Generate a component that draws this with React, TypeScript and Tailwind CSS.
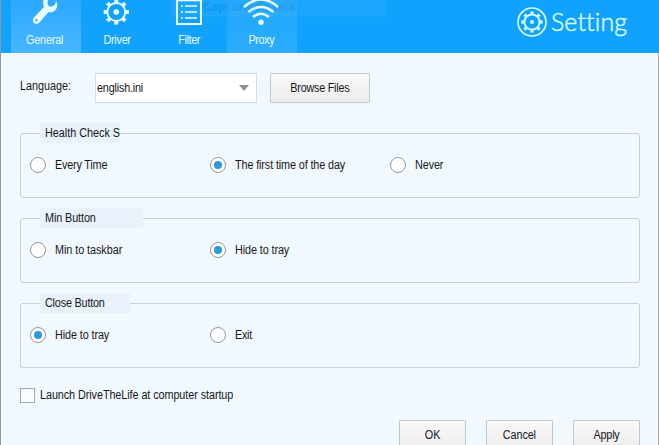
import type { ReactNode } from "react";

function Label({ children, className = "" }: { children: ReactNode; className?: string }) {
  return (
    <span className={`inline-block whitespace-nowrap text-[12px] leading-4 scale-x-90 ${className}`}>
      {children}
    </span>
  );
}

function GearShape({ r, teeth, tooth, stroke, dot }: { r: number; teeth: number; tooth: number; stroke: number; dot: number }) {
  return (
    <>
      <circle r={r} fill="none" stroke="currentColor" strokeWidth={stroke} />
      {Array.from({ length: teeth }, (_, i) => (
        <rect
          key={i}
          x={-tooth / 2}
          y={-r - tooth * 0.95}
          width={tooth}
          height={tooth}
          fill="currentColor"
          transform={`rotate(${(i * 360) / teeth})`}
        />
      ))}
      <circle r={dot} fill="currentColor" />
    </>
  );
}

function WrenchIcon() {
  return (
    <svg className="h-7 w-[70px]" viewBox="0 0 70 28">
      <path
        d="M34 -4 C32 -1 31.6 3.4 33 7 L22.9 17.6 C19.9 21.4 24.4 26 28.2 22.8 L37.6 12 C42.6 13.4 46.6 9.6 46.2 3.6 L45 0.6 C44.6 3.8 43.4 6 40.8 6.6 C38 7 36.2 5 36.4 2 L38.6 -4 Z"
        fill="currentColor"
      />
      <circle cx="25.4" cy="20.2" r="1.2" fill="#3baeff" />
    </svg>
  );
}

function DriverIcon() {
  return (
    <svg className="h-7 w-[70px]" viewBox="0 0 70 28">
      <g transform="translate(33.3 12)">
        <GearShape r={9} teeth={8} tooth={3.8} stroke={2} dot={2.8} />
      </g>
    </svg>
  );
}

function FilterIcon() {
  return (
    <svg className="h-7 w-[70px]" viewBox="0 0 70 28">
      <rect x="22" y="0.3" width="24" height="23.7" fill="none" stroke="currentColor" strokeWidth="2" />
      {[6, 12, 18].map((y) => (
        <g key={y} stroke="currentColor" strokeWidth="1.7">
          <path d={`M26 ${y}h2M30 ${y}h12`} />
        </g>
      ))}
    </svg>
  );
}

function ProxyIcon() {
  return (
    <svg className="h-7 w-[70px]" viewBox="0 0 70 28">
      <g fill="none" stroke="currentColor" strokeWidth="2.4">
        <path d="M26 17 Q34 10.5 42 17" />
        <path d="M21.4 12 Q34 1.8 46.6 12" />
        <path d="M17 7 Q34 -8 51 7" />
      </g>
      <circle cx="34" cy="22.3" r="2.7" fill="currentColor" />
    </svg>
  );
}

function Tab({ icon, label, className = "", labelClass = "" }: { icon: ReactNode; label: string; className?: string; labelClass?: string }) {
  return (
    <div className={`flex h-[53px] w-[70px] flex-col items-center text-[#eafcff] ${className}`}>
      {icon}
      <Label className={`mt-1 mr-0.5 ${labelClass}`}>{label}</Label>
    </div>
  );
}

function Button({ children, className = "" }: { children: ReactNode; className?: string }) {
  return (
    <button className={`flex h-[30px] items-center justify-center rounded-[1px] border border-[#c3c8cd] bg-linear-to-b from-[#f9f9f9] to-[#ededee] ${className}`}>
      {children}
    </button>
  );
}

function Radio({ label, checked = false, tracking }: { label: string; checked?: boolean; tracking: string }) {
  return (
    <div className="flex w-[180px] items-center gap-[9px]">
      <span className="flex size-4 shrink-0 items-center justify-center rounded-full border border-[#92979c] bg-white">
        {checked && <span className="size-2 rounded-full bg-[#2b9ada]" />}
      </span>
      <Label className={`origin-left ${tracking}`}>{label}</Label>
    </div>
  );
}

function Group({ title, titleClass, children }: { title: string; titleClass: string; children: ReactNode }) {
  return (
    <section className="h-[65px] w-[620px] rounded-[3px] border border-[#c3d1de]">
      <div className={`-mt-[11px] ml-[19px] flex h-5 items-center bg-[#e9f2fb] pl-[5px] ${titleClass}`}>
        <Label className="origin-left">{title}</Label>
      </div>
      <div className="mt-3.5 flex pl-[9px]">{children}</div>
    </section>
  );
}

export default function App() {
  return (
    <div className="h-[445px] w-[659px] overflow-hidden border-l border-[#8f969e] bg-[#f2f9fe] font-['Liberation_Sans',Arial,sans-serif] text-[#15171a]">
      <header className="relative flex h-[53px] bg-[#11a2fe] pl-2.5">
        <div className="absolute top-0 left-[171px] h-[17px] w-[214px] bg-[#1ba5fc]">
          <span className="ml-[31px] block font-['Open_Sans',sans-serif] text-[12px] leading-[14px] font-bold whitespace-nowrap text-[#1798ec]">Captura de tela</span>
        </div>
        <nav className="relative flex gap-0.5">
          <Tab icon={<WrenchIcon />} label="General" className="bg-linear-to-b from-[#2ba8ff] to-[#47b6ff]" labelClass="tracking-[-0.2px]" />
          <Tab icon={<DriverIcon />} label="Driver" labelClass="tracking-[-0.3px]" />
          <Tab icon={<FilterIcon />} label="Filter" labelClass="tracking-[-0.4px]" />
          <Tab icon={<ProxyIcon />} label="Proxy" className="bg-linear-to-b from-white/5 to-white/12" labelClass="tracking-[-0.4px]" />
        </nav>
        <div className="ml-auto flex items-start pr-8 text-[#d5fbff]">
          <svg className="mt-[7px] size-[30px]" viewBox="-15 -15 30 30">
            <circle r="14" fill="none" stroke="currentColor" strokeWidth="1.7" />
            <GearShape r={7.6} teeth={8} tooth={3.2} stroke={2} dot={2} />
          </svg>
          <span className="mt-[5px] ml-1 w-[76px] font-[Lato,sans-serif] text-[25px] leading-8 font-light tracking-[0.1px] [-webkit-text-stroke:0.5px_currentColor]">Setting</span>
        </div>
      </header>

      <main className="h-[392px] border-r border-[#a9adb1] pl-[19px]">
        <div className="flex h-[80px] items-start pt-5">
          <Label className="mt-[5px] w-[75px] origin-left">Language:</Label>
          <div className="flex h-[30px] w-[162px] items-center justify-between border border-[#d2dce4] bg-white pr-[7px] pl-px">
            <Label className="origin-left tracking-[-0.2px]">english.ini</Label>
            <span className="border-x-[5px] border-t-[6px] border-x-transparent border-t-[#8d9092]" />
          </div>
          <Button className="ml-[13px] w-[100px]">
            <Label className="tracking-[-0.25px]">Browse Files</Label>
          </Button>
        </div>

        <div className="flex flex-col gap-5">
          <Group title="Health Check S" titleClass="w-[80px]">
            <Radio label="Every Time" tracking="tracking-[-0.2px]" />
            <Radio label="The first time of the day" checked tracking="tracking-[-0.12px]" />
            <Radio label="Never" tracking="tracking-[-0.1px]" />
          </Group>
          <Group title="Min Button" titleClass="w-[103px] tracking-[-0.1px]">
            <Radio label="Min to taskbar" tracking="tracking-[-0.05px]" />
            <Radio label="Hide to tray" checked tracking="tracking-[-0.1px]" />
          </Group>
          <Group title="Close Button" titleClass="w-[90px] tracking-[-0.2px]">
            <Radio label="Hide to tray" checked tracking="tracking-[-0.1px]" />
            <Radio label="Exit" tracking="tracking-[-0.3px]" />
          </Group>
        </div>

        <div className="mt-[19px] flex items-center gap-[5px]">
          <span className="mt-px size-[15px] border border-[#9fa9b1] bg-[#f8fcff]" />
          <Label className="origin-left tracking-[-0.07px]">Launch DriveTheLife at computer startup</Label>
        </div>

        <div className="mt-[17px] flex justify-end gap-5 pr-[18px]">
          <Button className="w-[67px]"><Label>OK</Label></Button>
          <Button className="w-[67px]"><Label className="tracking-[-0.1px]">Cancel</Label></Button>
          <Button className="w-[67px]"><Label className="tracking-[-0.2px]">Apply</Label></Button>
        </div>
      </main>
    </div>
  );
}
